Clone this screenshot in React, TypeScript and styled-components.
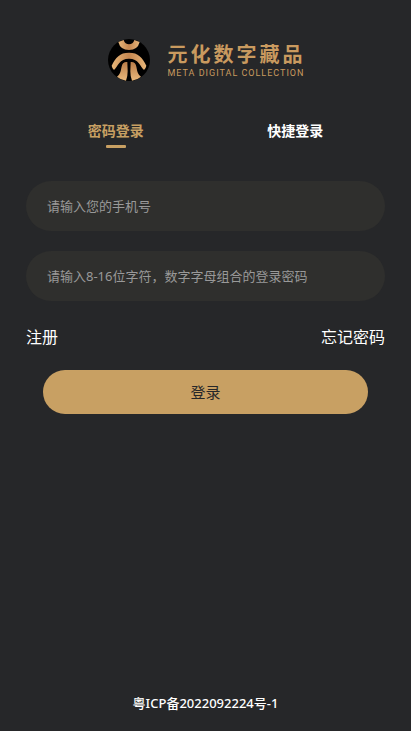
import React, { useState } from "react";
import styled, { createGlobalStyle } from "styled-components";

const GlobalStyle = createGlobalStyle`
  * { box-sizing: border-box; }
  body {
    margin: 0;
    background: #262729;
    color: #fff;
    font-family: "Noto Sans", "Noto Sans CJK SC", sans-serif;
  }
`;

const gold = "#c8a063";

const Page = styled.main`
  min-height: 100vh;
  display: flex;
  flex-direction: column;
  padding: 39px 26px 18px;
`;

const Brand = styled.header`
  display: flex;
  justify-content: center;
  align-items: center;
  gap: 18px;
  height: 42px;
`;

const Emblem = styled.svg`
  width: 42px;
  height: 42px;
  flex: none;
`;

const Wordmark = styled.div`
  display: flex;
  flex-direction: column;
  padding-top: 2px;
  color: #c99a5f;
`;

const BrandName = styled.span`
  font-size: 20px;
  line-height: 24px;
  font-weight: 700;
  letter-spacing: 3px;
  margin-right: -3px;
`;

const BrandCaption = styled.span`
  font-family: Roboto, sans-serif;
  font-size: 9px;
  line-height: 12px;
  letter-spacing: 1px;
  margin-right: -1px;
`;

const Tabs = styled.div`
  display: grid;
  grid-template-columns: 1fr 1fr;
  margin-top: 38px;
`;

const Tab = styled.button<{ $active: boolean }>`
  display: flex;
  flex-direction: column;
  align-items: center;
  gap: 3px;
  padding: 0;
  border: 0;
  background: none;
  color: ${(p) => (p.$active ? gold : "#fff")};
  font-family: inherit;
  font-size: 14px;
  font-weight: 700;
  line-height: 23px;
  cursor: pointer;
  &::after {
    content: "";
    width: 20px;
    height: 3px;
    border-radius: 1px;
    background: ${(p) => (p.$active ? gold : "transparent")};
  }
`;

const Form = styled.form`
  display: flex;
  flex-direction: column;
  gap: 20px;
  margin-top: 33px;
`;

const Field = styled.input`
  width: 100%;
  height: 50px;
  padding: 0 21px;
  border: 0;
  border-radius: 25px;
  outline: 0;
  background: #2f2f2d;
  color: #fff;
  font-family: inherit;
  font-size: 13px;
  &::placeholder { color: #999; opacity: 1; }
`;

const Links = styled.nav`
  display: flex;
  justify-content: space-between;
  margin-top: 4px;
`;

const TextLink = styled.a`
  color: #fff;
  font-size: 16px;
  line-height: 24px;
  text-decoration: none;
`;

const Submit = styled.button`
  height: 44px;
  margin: 1px 17px 0;
  padding: 0 0 2px;
  border: 0;
  border-radius: 22px;
  background: ${gold};
  color: #262729;
  font-family: inherit;
  font-size: 15px;
  cursor: pointer;
`;

const Footer = styled.footer`
  margin-top: auto;
  text-align: center;
`;

const RecordLink = styled.a`
  color: #fff;
  font-size: 13px;
  line-height: 20px;
  font-weight: 500;
  text-decoration: none;
`;

function Logo() {
  return (
    <Emblem viewBox="23 27 126 126" aria-hidden="true">
      <defs>
        <linearGradient id="arch" x1="0" y1="0" x2="1" y2="0">
          <stop offset="0" stopColor="#e8b679" />
          <stop offset="0.5" stopColor="#c48650" />
          <stop offset="1" stopColor="#e8b679" />
        </linearGradient>
        <linearGradient id="leg" x1="0" y1="0" x2="0" y2="1">
          <stop offset="0" stopColor="#b97c48" />
          <stop offset="1" stopColor="#eab97c" />
        </linearGradient>
      </defs>
      <circle cx="86" cy="90" r="63" fill="#000" />
      <path fill="url(#arch)" d="M54 36 L70 30 Q74 43 86 43 Q98 43 102 30 L118 36 Q112 60 86 60 Q60 60 54 36Z" />
      <path fill="url(#arch)" d="M34 107 C46 82 58 68 86 68 C114 68 126 82 138 107 Q137 114 131 120 C119 108 115 86 86 86 C57 86 53 108 41 120 Q35 114 34 107Z" />
      <path fill="url(#leg)" d="M81 96 L82 124 Q82 141 77 152 Q61 150 50 140 C68 129 58 103 73 97 Q76 95 81 96Z" />
      <path fill="url(#leg)" d="M91 96 L90 124 Q90 141 95 152 Q111 150 122 140 C104 129 114 103 99 97 Q96 95 91 96Z" />
    </Emblem>
  );
}

type Mode = "password" | "quick";

export default function App() {
  const [mode, setMode] = useState<Mode>("password");
  return (
    <>
      <GlobalStyle />
      <Page lang="zh-CN">
        <Brand>
          <Logo />
          <Wordmark>
            <BrandName>元化数字藏品</BrandName>
            <BrandCaption>META DIGITAL COLLECTION</BrandCaption>
          </Wordmark>
        </Brand>
        <Tabs role="tablist">
          <Tab type="button" role="tab" aria-selected={mode === "password"} $active={mode === "password"} onClick={() => setMode("password")}>密码登录</Tab>
          <Tab type="button" role="tab" aria-selected={mode === "quick"} $active={mode === "quick"} onClick={() => setMode("quick")}>快捷登录</Tab>
        </Tabs>
        <Form onSubmit={(e) => e.preventDefault()}>
          <Field type="tel" aria-label="手机号" placeholder="请输入您的手机号" />
          <Field type="password" aria-label="登录密码" placeholder="请输入8-16位字符，数字字母组合的登录密码" />
          <Links>
            <TextLink href="#register">注册</TextLink>
            <TextLink href="#forgot">忘记密码</TextLink>
          </Links>
          <Submit type="submit">登录</Submit>
        </Form>
        <Footer>
          <RecordLink href="#record">粤ICP备2022092224号-1</RecordLink>
        </Footer>
      </Page>
    </>
  );
}
